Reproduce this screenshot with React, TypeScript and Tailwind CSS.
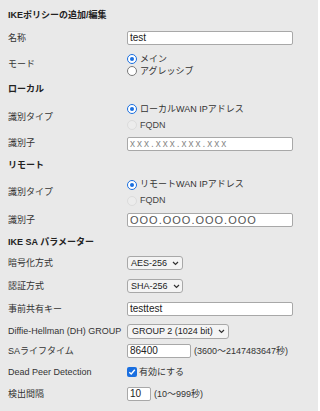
import React from "react";

const font = { fontFamily: '"Liberation Sans", "Noto Sans CJK JP", sans-serif' };

function Radio({ state, label }: { state: "on" | "off" | "disabled"; label: string }) {
  return (
    <div className="flex h-[16px] items-center gap-[3px] whitespace-nowrap">
      {state === "on" && (
        <span className="flex h-[10px] w-[10px] items-center justify-center rounded-full border-[1.5px] border-[#1a6fe0] bg-white">
          <span className="h-[4px] w-[4px] rounded-full bg-[#1a6fe0]" />
        </span>
      )}
      {state === "off" && (
        <span className="h-[10px] w-[10px] rounded-full border-[1.5px] border-[#7a7a7a] bg-white" />
      )}
      {state === "disabled" && (
        <span className="h-[10px] w-[10px] rounded-full border border-[#dcdcdc] bg-[#ececec]" />
      )}
      <span className={state === "disabled" ? "text-[#444]" : "text-[#333]"}>{label}</span>
    </div>
  );
}

function Chevron() {
  return (
    <svg width="7" height="5" viewBox="0 0 7 5" className="ml-[5px] shrink-0">
      <path d="M1 1 L3.5 3.5 L6 1" fill="none" stroke="#333" strokeWidth="1.2" />
    </svg>
  );
}

function Select({ value, w }: { value: string; w: string }) {
  return (
    <div
      className={`flex h-[14px] items-center whitespace-nowrap rounded-[3px] border border-[#a8a8a8] bg-[#f4f4f4] pl-[3px] text-[9px] text-[#222] ${w}`}
    >
      <span>{value}</span>
      <Chevron />
    </div>
  );
}

function Row({ h, label, children, bold }: { h: string; label: string; children?: React.ReactNode; bold?: boolean }) {
  return (
    <div className={`flex items-center whitespace-nowrap ${h}`}>
      <div className={`w-[119px] shrink-0 ${bold ? "font-bold text-[#222]" : "text-[#333]"}`}>{label}</div>
      {children}
    </div>
  );
}

export default function App() {
  return (
    <div className="min-h-screen w-[318px] bg-[#e9e9e9] pl-[8px] pt-[4px] text-[9px] leading-none" style={font}>
      <div className="flex h-[22px] items-center font-bold text-[#222]">IKEポリシーの追加/編集</div>
      <Row h="h-[24px]" label="名称">
        <div className="flex h-[14px] w-[166px] items-center rounded-[2px] border border-[#a8a8a8] bg-white pl-[2px] text-[10px] text-[#222]">
          test
        </div>
      </Row>
      <Row h="h-[28px]" label="モード">
        <div className="flex flex-col">
          <div className="h-[14px]">
            <Radio state="on" label="メイン" />
          </div>
          <div className="-mt-[2px] h-[14px]">
            <Radio state="off" label="アグレッシブ" />
          </div>
        </div>
      </Row>
      <div className="flex h-[22px] items-center font-bold text-[#222]">ローカル</div>
      <Row h="h-[34px]" label="識別タイプ">
        <div className="flex flex-col">
          <Radio state="on" label="ローカルWAN IPアドレス" />
          <Radio state="disabled" label="FQDN" />
        </div>
      </Row>
      <Row h="h-[19px]" label="識別子">
        <div className="flex h-[14px] w-[166px] items-center rounded-[2px] border border-[#a8a8a8] bg-white pl-[2px] text-[10px] tracking-[2px] text-[#8a8a8a]">
          xxx.xxx.xxx.xxx
        </div>
      </Row>
      <div className="flex h-[24px] items-center font-bold text-[#222]">リモート</div>
      <Row h="h-[31px]" label="識別タイプ">
        <div className="flex flex-col">
          <Radio state="on" label="リモートWAN IPアドレス" />
          <Radio state="disabled" label="FQDN" />
        </div>
      </Row>
      <Row h="h-[24px]" label="識別子">
        <div className="flex h-[14px] w-[166px] items-center rounded-[2px] border border-[#a8a8a8] bg-white pl-[2px] text-[11px] tracking-[1px] text-[#555]">
          OOO.OOO.OOO.OOO
        </div>
      </Row>
      <div className="flex h-[20px] items-center font-bold text-[#222]">IKE SA パラメーター</div>
      <Row h="h-[22px]" label="暗号化方式">
        <Select value="AES-256" w="w-[56px]" />
      </Row>
      <Row h="h-[24px]" label="認証方式">
        <Select value="SHA-256" w="w-[56px]" />
      </Row>
      <Row h="h-[22px]" label="事前共有キー">
        <div className="flex h-[14px] w-[166px] items-center rounded-[2px] border border-[#a8a8a8] bg-white pl-[2px] text-[10px] text-[#222]">
          testtest
        </div>
      </Row>
      <Row h="h-[22px]" label="Diffie-Hellman (DH) GROUP">
        <div className="flex h-[15px] w-[102px] items-center whitespace-nowrap rounded-[3px] border border-[#a8a8a8] bg-[#f4f4f4] pl-[4px] text-[9px] text-[#222]">
          <span>GROUP 2 (1024 bit)</span>
          <Chevron />
        </div>
      </Row>
      <Row h="h-[18px]" label="SAライフタイム">
        <div className="flex h-[14px] w-[64px] items-center rounded-[2px] border border-[#a8a8a8] bg-white pl-[2px] text-[10px] text-[#222]">
          86400
        </div>
        <span className="ml-[3px] text-[#333]">(3600～2147483647秒)</span>
      </Row>
      <Row h="h-[24px]" label="Dead Peer Detection">
        <div className="flex items-center gap-[2px]">
          <span className="flex h-[10px] w-[10px] items-center justify-center rounded-[2px] bg-[#1a6fe0]">
            <svg width="8" height="8" viewBox="0 0 8 8">
              <path d="M1.3 4.2 L3.2 6 L6.8 1.8" fill="none" stroke="white" strokeWidth="1.4" />
            </svg>
          </span>
          <span className="text-[#333]">有効にする</span>
        </div>
      </Row>
      <Row h="h-[20px]" label="検出間隔">
        <div className="flex h-[14px] w-[24px] items-center rounded-[2px] border border-[#a8a8a8] bg-white pl-[2px] text-[10px] text-[#222]">
          10
        </div>
        <span className="ml-[3px] text-[#333]">(10～999秒)</span>
      </Row>
    </div>
  );
}
